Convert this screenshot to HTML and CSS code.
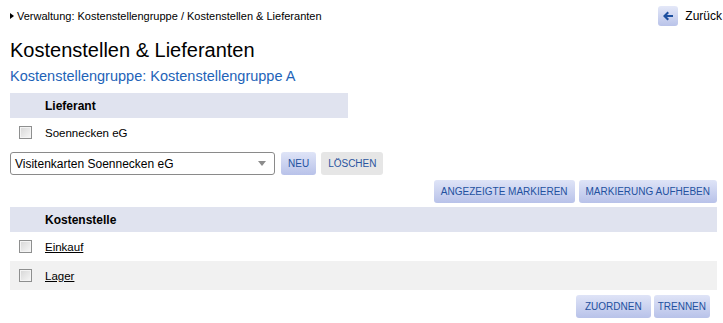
FILE: index.html
```html
<!DOCTYPE html>
<html lang="de">
<head>
<meta charset="utf-8">
<title>Kostenstellen &amp; Lieferanten</title>
<link rel="stylesheet" href="styles.css">
</head>
<body>
<div class="page">
  <div class="topbar">
    <div class="crumb"><span class="tri"></span>Verwaltung: Kostenstellengruppe / Kostenstellen &amp; Lieferanten</div>
    <a class="back" href="#">
      <span class="back-icon"><svg width="12" height="12" viewBox="0 0 12 12"><path d="M1 6 L5.5 1.5 L7 3 L5 5 L11 5 L11 7 L5 7 L7 9 L5.5 10.5 Z" fill="#1d4f9f"/></svg></span>
      <span class="back-text">Zurück</span>
    </a>
  </div>
  <h1 class="title">Kostenstellen &amp; Lieferanten</h1>
  <h2 class="subtitle">Kostenstellengruppe: Kostenstellengruppe A</h2>

  <div class="table narrow">
    <div class="thead"><span class="cb-space"></span><span class="th">Lieferant</span></div>
    <div class="row"><span class="cb"></span><span class="cell">Soennecken eG</span></div>
  </div>

  <div class="select-row">
    <div class="select"><span>Visitenkarten Soennecken eG</span><span class="caret"></span></div>
    <button class="btn">NEU</button>
    <button class="btn gray">LÖSCHEN</button>
  </div>

  <div class="actions">
    <button class="btn">ANGEZEIGTE MARKIEREN</button>
    <button class="btn">MARKIERUNG AUFHEBEN</button>
  </div>

  <div class="table">
    <div class="thead"><span class="cb-space"></span><span class="th">Kostenstelle</span></div>
    <div class="row"><span class="cb"></span><a class="cell link" href="#">Einkauf</a></div>
    <div class="row alt"><span class="cb"></span><a class="cell link" href="#">Lager</a></div>
  </div>

  <div class="actions bottom">
    <button class="btn wide">ZUORDNEN</button>
    <button class="btn tight">TRENNEN</button>
  </div>
</div>
</body>
</html>
```
FILE: styles.css
```css
html, body {
  margin: 0;
  padding: 0;
  background: #fff;
}
body {
  font-family: "Liberation Sans", Arial, sans-serif;
  font-size: 12px;
  color: #000;
  overflow: hidden;
}
.page {
  padding-left: 10px;
  width: 707px;
}
.topbar {
  display: flex;
  align-items: center;
  height: 20px;
  padding-top: 6px;
  width: 712px;
}
.crumb {
  display: flex;
  align-items: center;
  line-height: 20px;
  font-size: 11px;
}
.tri {
  width: 0;
  height: 0;
  border-top: 3.5px solid transparent;
  border-bottom: 3.5px solid transparent;
  border-left: 4px solid #000;
  margin-right: 3px;
}
.back {
  margin-left: auto;
  display: flex;
  align-items: center;
  text-decoration: none;
  color: #000;
}
.back-icon {
  width: 20px;
  height: 20px;
  border-radius: 3px;
  background: linear-gradient(#e4e8f8, #b9c3e9);
  display: flex;
  align-items: center;
  justify-content: center;
}
.back-text {
  margin-left: 7px;
  line-height: 20px;
}
.title {
  margin: 12px 0 0;
  font-size: 20px;
  line-height: 24px;
  font-weight: normal;
}
.subtitle {
  margin: 5px 0 0;
  font-size: 14.5px;
  line-height: 18px;
  font-weight: normal;
  color: #1e63b8;
}
.table {
  width: 707px;
}
.table.narrow {
  width: 338px;
  margin-top: 8px;
}
.thead {
  display: flex;
  align-items: center;
  height: 25px;
  background: #e0e3ef;
}
.cb-space {
  width: 35px;
}
.th {
  font-weight: bold;
}
.row {
  display: flex;
  align-items: center;
  height: 29px;
}
.row.alt {
  background: #f1f1f1;
}
.cell {
  font-size: 11.5px;
}
.cb {
  box-sizing: border-box;
  width: 13px;
  height: 13px;
  margin-left: 9px;
  margin-right: 13px;
  border: 1px solid #8e8f8f;
  background: linear-gradient(135deg, #d6d6d6, #f7f7f7);
  box-shadow: inset 0 0 0 1px #f4f4f4;
}
.link {
  color: #000;
  text-decoration: underline;
}
.select-row {
  display: flex;
  align-items: center;
  margin-top: 5px;
}
.select {
  box-sizing: border-box;
  width: 265px;
  height: 23px;
  border: 1px solid #8a8a8a;
  border-radius: 3px;
  display: flex;
  align-items: center;
  padding-left: 4px;
  padding-right: 8px;
  background: #fff;
}
.select span:first-child {
  flex: 1;
}
.caret {
  width: 0;
  height: 0;
  border-left: 4px solid transparent;
  border-right: 4px solid transparent;
  border-top: 5px solid #8c8c8c;
}
.btn {
  font-family: "Liberation Sans", Arial, sans-serif;
  font-size: 10px;
  color: #23519f;
  height: 23px;
  padding: 0 7px;
  border: none;
  border-radius: 3px;
  background: linear-gradient(#dfe4f7, #b8c2e9);
  margin: 0;
  cursor: pointer;
}
.btn.wide {
  padding: 0 9px;
}
.btn.tight {
  padding: 0 4px;
}
.select-row .btn {
  margin-left: 6px;
}
.select-row .btn.gray {
  margin-left: 5px;
  background: #e6e6e6;
  color: #2a55a0;
}
.actions {
  display: flex;
  justify-content: flex-end;
  gap: 4px;
  margin-top: 5px;
  margin-bottom: 4px;
}
.actions.bottom {
  gap: 3px;
  margin-top: 5px;
  padding-right: 7px;
}
```
